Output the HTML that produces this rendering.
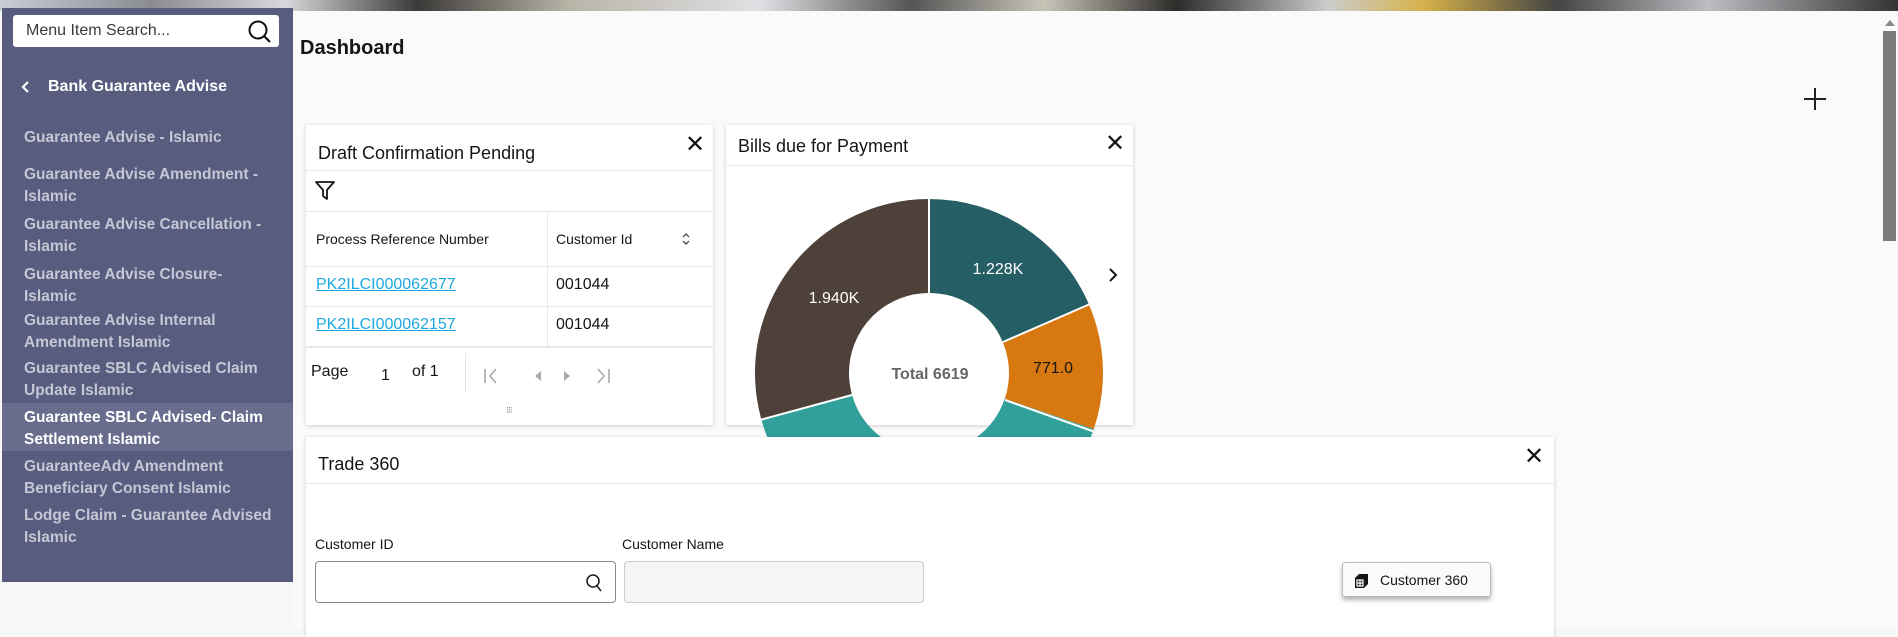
<!DOCTYPE html>
<html><head><meta charset="utf-8">
<style>
*{margin:0;padding:0;box-sizing:border-box}
body{width:1898px;height:627px;overflow:hidden;position:relative;background:#f7f7f7;font-family:"Liberation Sans",sans-serif;color:#161513}
.abs{position:absolute}
.top{left:0;top:0;width:1898px;height:11px;background:linear-gradient(90deg,#c9ccd6 0,#8a8c92 8%,#d8d8dc 15%,#3c3a38 22%,#b9b4a8 30%,#e0e0e4 40%,#555 48%,#c8c4b8 55%,#2e2c2a 62%,#ccc 70%,#d6b24a 75%,#444 82%,#bdbdc2 90%,#333 100%)}
.side{left:2px;top:8px;width:291px;height:574px;background:#585d80}
.search{left:13px;top:15px;width:266px;height:32px;background:#fff;border-radius:3px}
.search span{position:absolute;left:13px;top:7px;font-size:16px;color:#3b3b3b}
.mi{left:24px;font-size:15.5px;font-weight:bold;color:#c5c7d5;line-height:22px;width:270px}
.card{background:#fff;box-shadow:0 1px 4px rgba(0,0,0,.18)}
.x{font-size:24px;line-height:24px;color:#161513}
.hl{height:1px;background:#e8e8e8}
</style></head><body>
<div class="abs top"></div>
<div class="abs" style="left:294px;top:11px;width:1604px;height:616px;background:#fafafa"></div>
<div class="abs side"></div>
<div class="abs search"><span>Menu Item Search...</span>
<svg class="abs" style="left:234px;top:4px" width="26" height="26" viewBox="0 0 26 26"><circle cx="11" cy="11" r="8.5" fill="none" stroke="#111" stroke-width="2"/><line x1="17" y1="17" x2="23" y2="23" stroke="#111" stroke-width="2.2"/></svg></div>
<svg class="abs" style="left:21px;top:80px" width="10" height="14" viewBox="0 0 10 14"><path d="M7 2 L2 7 L7 12" fill="none" stroke="#fff" stroke-width="2.2"/></svg>
<div class="abs" style="left:48px;top:78px;font-size:16px;font-weight:bold;color:#fff">Bank Guarantee Advise</div>
<div class="abs mi" style="top:127px">Guarantee Advise - Islamic</div>
<div class="abs mi" style="top:164px">Guarantee Advise Amendment -<br>Islamic</div>
<div class="abs mi" style="top:214px">Guarantee Advise Cancellation -<br>Islamic</div>
<div class="abs mi" style="top:264px">Guarantee Advise Closure-<br>Islamic</div>
<div class="abs mi" style="top:310px">Guarantee Advise Internal<br>Amendment Islamic</div>
<div class="abs mi" style="top:358px">Guarantee SBLC Advised Claim<br>Update Islamic</div>
<div class="abs" style="left:2px;top:403px;width:291px;height:48px;background:#686c8d"></div>
<div class="abs mi" style="top:407px;color:#fff">Guarantee SBLC Advised- Claim<br>Settlement Islamic</div>
<div class="abs mi" style="top:456px">GuaranteeAdv Amendment<br>Beneficiary Consent Islamic</div>
<div class="abs mi" style="top:505px">Lodge Claim - Guarantee Advised<br>Islamic</div>

<div class="abs" style="left:300px;top:37px;font-size:20px;font-weight:bold">Dashboard</div>
<svg class="abs" style="left:1804px;top:88px" width="22" height="22"><line x1="11" y1="0" x2="11" y2="22" stroke="#222" stroke-width="2"/><line x1="0" y1="11" x2="22" y2="11" stroke="#222" stroke-width="2"/></svg>
<div class="abs" style="left:1882px;top:12px;width:16px;height:615px;background:#fafafa"></div>
<svg class="abs" style="left:1885px;top:20px" width="10" height="6"><path d="M0 6 L5 0 L10 6Z" fill="#888"/></svg>
<div class="abs" style="left:1883px;top:31px;width:13px;height:210px;background:#7b7b7b"></div>

<!-- Draft card -->
<div class="abs card" style="left:306px;top:125px;width:407px;height:300px">
<div class="abs" style="left:12px;top:18px;font-size:18px">Draft Confirmation Pending</div>
<div class="abs x" style="left:379px;top:8px">✕</div>
<div class="abs hl" style="left:0;top:45px;width:407px"></div>
<svg class="abs" style="left:8px;top:54px" width="22" height="22" viewBox="0 0 22 22"><path d="M2 3 H20 L13 11 V20 L9 17 V11 Z" fill="none" stroke="#161513" stroke-width="1.8" stroke-linejoin="round"/></svg>
<div class="abs hl" style="left:0;top:86px;width:407px"></div>
<div class="abs hl" style="left:0;top:141px;width:407px"></div>
<div class="abs hl" style="left:0;top:181px;width:407px"></div>
<div class="abs hl" style="left:0;top:221px;width:407px;height:2px"></div>
<div class="abs" style="left:241px;top:86px;width:1px;height:135px;background:#e8e8e8"></div>
<div class="abs" style="left:10px;top:106px;font-size:14px">Process Reference Number</div>
<div class="abs" style="left:250px;top:106px;font-size:14px">Customer Id</div>
<svg class="abs" style="left:376px;top:107px" width="8" height="14"><path d="M1 5 L4 2 L7 5 M1 9 L4 12 L7 9" fill="none" stroke="#333" stroke-width="1.2"/></svg>
<div class="abs" style="left:10px;top:151px;font-size:16px;color:#1ea7e0;text-decoration:underline">PK2ILCI000062677</div>
<div class="abs" style="left:250px;top:151px;font-size:16px">001044</div>
<div class="abs" style="left:10px;top:191px;font-size:16px;color:#1ea7e0;text-decoration:underline">PK2ILCI000062157</div>
<div class="abs" style="left:250px;top:191px;font-size:16px">001044</div>
<div class="abs" style="left:5px;top:238px;font-size:16px">Page</div>
<div class="abs" style="left:75px;top:242px;font-size:16px">1</div>
<div class="abs" style="left:106px;top:238px;font-size:16px">of 1</div>
<div class="abs" style="left:159px;top:228px;width:1px;height:40px;background:#e4e4e4"></div>
<svg class="abs" style="left:176px;top:241px" width="150" height="20"><path d="M3 3 V17 M14 3 L8 10 L14 17" fill="none" stroke="#aaa" stroke-width="1.6"/><path d="M59 5 L53 10 L59 15Z" fill="#aaa"/><path d="M82 5 L88 10 L82 15Z" fill="#aaa"/><path d="M116 3 L122 10 L116 17 M127 3 V17" fill="none" stroke="#aaa" stroke-width="1.6"/></svg>
<div class="abs" style="left:200px;top:280px;font-size:9px;color:#777;letter-spacing:-1px">⁝⁝⁝</div>
</div>

<!-- Bills card -->
<div class="abs card" style="left:726px;top:125px;width:407px;height:300px">
<div class="abs" style="left:12px;top:11px;font-size:18px">Bills due for Payment</div>
<div class="abs x" style="left:379px;top:7px">✕</div>
<div class="abs hl" style="left:0;top:40px;width:407px"></div>
<svg class="abs" style="left:382px;top:142px" width="10" height="16"><path d="M2 2 L8 8 L2 14" fill="none" stroke="#161513" stroke-width="2"/></svg>
</div>
<svg class="abs" style="left:0;top:0;z-index:1" width="1898" height="627">
<g transform="rotate(-90 929 373)" fill="none" stroke-width="94">
<circle cx="929" cy="373" r="127" stroke="#255f65" stroke-dasharray="148.2 1000" stroke-dashoffset="0"/>
<circle cx="929" cy="373" r="127" stroke="#d87811" stroke-dasharray="92.9 1000" stroke-dashoffset="-148.2"/>
<circle cx="929" cy="373" r="127" stroke="#31a09a" stroke-dasharray="323.2 1000" stroke-dashoffset="-241.1"/>
<circle cx="929" cy="373" r="127" stroke="#4e4139" stroke-dasharray="233.9 1000" stroke-dashoffset="-564.3"/>
</g>
<g stroke="#fff" stroke-width="2">
<line x1="929" y1="293" x2="929" y2="198"/>
<line x1="1003" y1="342" x2="1090" y2="304"/>
<line x1="1005" y1="400" x2="1095" y2="432"/>
<line x1="852" y1="395" x2="760" y2="420"/>
</g>
<g font-family="Liberation Sans,sans-serif" font-size="16" text-anchor="middle">
<text x="998" y="274" fill="#fff">1.228K</text>
<text x="834" y="303" fill="#fff">1.940K</text>
<text x="1053" y="373" fill="#161513">771.0</text>
<text x="930" y="379" fill="#666" font-weight="bold">Total 6619</text>
</g>
</svg>

<!-- Trade 360 -->
<div class="abs card" style="left:306px;top:437px;width:1248px;height:200px;z-index:2">
<div class="abs" style="left:12px;top:17px;font-size:18px">Trade 360</div>
<div class="abs x" style="left:1218px;top:8px">✕</div>
<div class="abs hl" style="left:0;top:46px;width:1248px"></div>
<div class="abs" style="left:9px;top:99px;font-size:14px">Customer ID</div>
<div class="abs" style="left:316px;top:99px;font-size:14px">Customer Name</div>
<div class="abs" style="left:9px;top:124px;width:301px;height:42px;border:1px solid #8a8a8a;border-radius:4px;background:#fff"></div>
<svg class="abs" style="left:279px;top:136px" width="18" height="20"><circle cx="8" cy="8" r="6" fill="none" stroke="#222" stroke-width="1.6"/><line x1="12" y1="13" x2="16" y2="18" stroke="#222" stroke-width="1.6"/></svg>
<div class="abs" style="left:318px;top:124px;width:300px;height:42px;border:1px solid #ccc;border-radius:4px;background:#f5f5f5"></div>
<div class="abs" style="left:1036px;top:125px;width:149px;height:35px;border:1px solid #bbb;border-radius:3px;background:#fbfaf9;box-shadow:0 3px 5px rgba(0,0,0,.3)">
<svg class="abs" style="left:10px;top:10px" width="16" height="16" viewBox="0 0 16 16"><path d="M2 5 L6 1 H15 V11 L11 15 H2 Z" fill="#161513"/><path d="M4 7 H10 V13 H4Z M4 10 H10 M7 7 V13" fill="none" stroke="#fff" stroke-width="1.2"/></svg>
<div class="abs" style="left:37px;top:9px;font-size:14px">Customer 360</div>
</div>
</div>
</body></html>
